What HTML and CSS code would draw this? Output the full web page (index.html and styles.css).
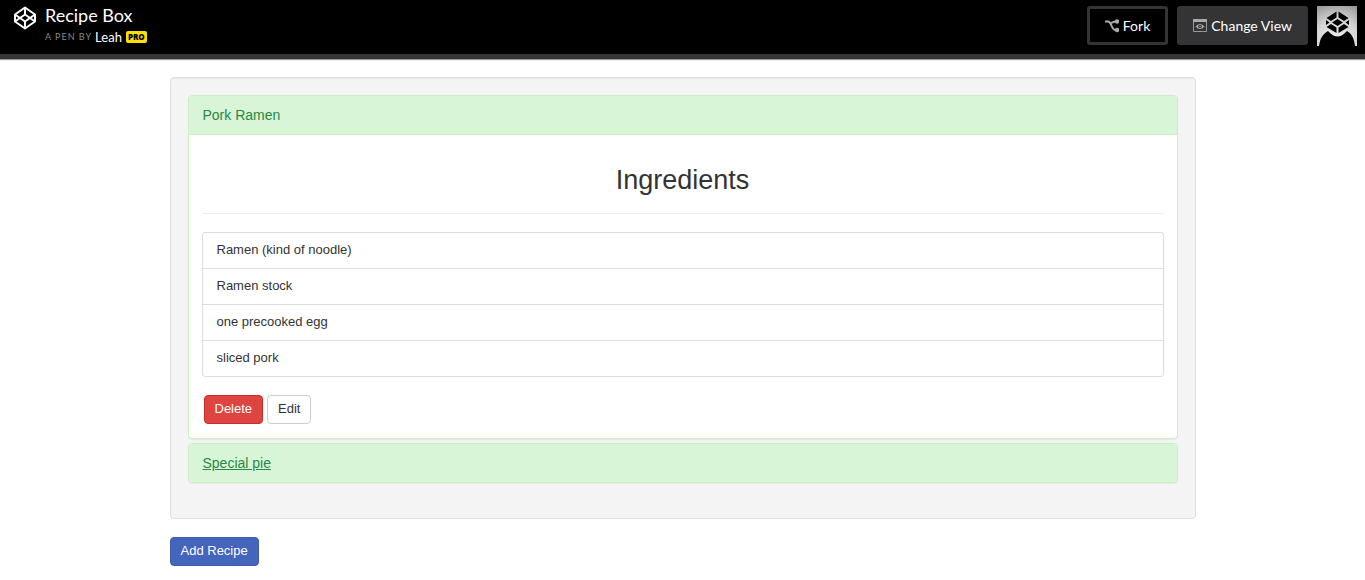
FILE: index.html
```html
<!DOCTYPE html>
<html lang="en">
<head>
  <meta charset="utf-8">
  <meta name="viewport" content="width=device-width, initial-scale=1">
  <title>Recipe Box</title>
  <link rel="stylesheet" href="styles.css">
</head>
<body>
  <header class="topbar">
    <a class="logo" href="#" aria-label="CodePen">
      <svg viewBox="0 0 24 24" width="24" height="24" fill="none" stroke="#fff" stroke-width="2" stroke-linejoin="round">
        <path d="M12 1.500 22 8.500V15.500L12 22.500 2 15.500V8.500Z"/>
        <path d="M12 1.500V8.500M12 15.500V22.500M2 8.500 12 15.500 22 8.500M2 15.500 12 8.500 22 15.500"/>
      </svg>
    </a>
    <div class="pen-title">
      <h1 class="pen-name">Recipe Box</h1>
      <div class="byline"><span class="by">A PEN BY</span><a class="author" href="#">Leah</a><span class="pro">PRO</span></div>
    </div>
    <nav class="actions">
      <button class="action fork" type="button">
        <svg class="icon" viewBox="0 0 14 14" width="14" height="14" fill="none" stroke="#aaa" stroke-width="2">
          <path d="M0 2.500H3C6.500 2.500 6.500 11 10.500 11H12M5 4C6.500 4.500 7.500 2.500 11 2.500"/>
          <circle cx="12" cy="2.500" r="1.200" fill="#aaa"/><circle cx="12" cy="11" r="1.200" fill="#aaa"/>
        </svg>
        Fork
      </button>
      <button class="action view" type="button">
        <svg class="icon" viewBox="0 0 14 13" width="14" height="13">
          <path d="M.5 .5H13.500V12.500H.5Z" fill="none" stroke="#999"/>
          <path d="M0 0H14V3H0Z" fill="#aaa"/>
          <path d="M2.500 7.500Q7 2.500 11.500 7.500Q7 12.500 2.500 7.500Z" fill="#aaa"/>
          <circle cx="7" cy="7.500" r="1.800" fill="#373739"/><circle cx="7" cy="7.500" r=".7" fill="#aaa"/>
        </svg>
        Change View
      </button>
      <a class="avatar" href="#" aria-label="Profile">
        <svg viewBox="0 0 40 40" width="40" height="40">
          <defs>
            <radialGradient id="glow" cx=".5" cy=".85" r=".95">
              <stop offset="0" stop-color="#eee"/><stop offset=".55" stop-color="#d6d6d6"/><stop offset="1" stop-color="#999"/>
            </radialGradient>
          </defs>
          <path d="M0 0H40V40H0Z" fill="url(#glow)"/>
          <path d="M2 40C3 32 6 28 11 25Q16 30.500 20.500 30.500T30 25C35 28 37 32 38 40Z" fill="#000"/>
          <path d="M19.500 5.500V11.500L14 15 9.500 12ZM21.500 5.500V11.500L27 15 31.500 12ZM9 14 12.500 16.500 9 19ZM32 14 28.500 16.500 32 19ZM20.500 13 26 16.500 20.500 20 15 16.500ZM9.500 21 14 18 19.500 21.500V27ZM31.500 21 27 18 21.500 21.500V27Z" fill="#000"/>
        </svg>
      </a>
    </nav>
  </header>

  <main class="container">
    <section class="well">
      <article class="panel">
        <h2 class="panel-heading"><a class="panel-link" href="#ramen">Pork Ramen</a></h2>
        <div class="panel-body" id="ramen">
          <h3 class="ingredients-title">Ingredients</h3>
          <ul class="list">
            <li class="list-item">Ramen (kind of noodle)</li>
            <li class="list-item">Ramen stock</li>
            <li class="list-item">one precooked egg</li>
            <li class="list-item">sliced pork</li>
          </ul>
          <div class="buttons">
            <button class="btn btn-danger" type="button">Delete</button>
            <button class="btn btn-default" type="button">Edit</button>
          </div>
        </div>
      </article>
      <article class="panel">
        <h2 class="panel-heading"><a class="panel-link underlined" href="#pie">Special pie</a></h2>
      </article>
    </section>
    <button class="btn btn-primary" type="button">Add Recipe</button>
  </main>
</body>
</html>
```
FILE: styles.css
```css
* {
  box-sizing: border-box;
}

body {
  margin: 0;
  background: #fff;
  color: #333;
  font: 13px/18px "Liberation Sans", Arial, sans-serif;
}

a {
  color: inherit;
  text-decoration: none;
}

.topbar {
  display: flex;
  align-items: flex-start;
  padding: 6px 8px 8px 13px;
  background: #000;
  border-bottom: 5px solid #343436;
  box-shadow: 0 1px 1px rgba(0, 0, 0, 0.4);
  color: #fff;
  font-family: Lato, sans-serif;
}

.logo {
  height: 24px;
}

.pen-title {
  margin-left: 8px;
}

.pen-name {
  margin: 0;
  font-size: 18px;
  font-weight: 400;
  line-height: 18px;
}

.byline {
  display: flex;
  align-items: center;
  margin-top: 4px;
}

.by {
  margin-right: 3px;
  color: #888;
  font-size: 9px;
  letter-spacing: 1px;
}

.author {
  font-size: 13px;
}

.pro {
  margin-left: 4px;
  padding: 0 2px;
  border-radius: 2px;
  background: #fce000;
  color: #000;
  font: 900 8px/12px "Open Sans", Lato, sans-serif;
}

.actions {
  display: flex;
  gap: 9px;
  margin-left: auto;
}

.action {
  display: flex;
  align-items: center;
  gap: 4px;
  height: 39px;
  border: 3px solid #343436;
  border-radius: 3px;
  color: #fff;
  font: 14px/20px Lato, sans-serif;
}

.fork {
  padding: 0 15px;
  background: #000;
}

.view {
  padding: 0 13px;
  background: #343436;
}

.avatar,
.avatar svg,
.logo svg {
  display: block;
}

.container {
  max-width: 1056px;
  margin: 0 auto;
  padding: 18px 15px 14px;
}

.well {
  display: flex;
  flex-direction: column;
  gap: 4px;
  margin-bottom: 18px;
  padding: 17px 17px 35px;
  border: 1px solid #dfdfdf;
  border-radius: 4px;
  background: #f4f4f4;
  box-shadow: inset 0 1px 1px rgba(0, 0, 0, 0.05);
}

.panel {
  border: 1px solid #caf0c2;
  border-radius: 4px;
  background: #fff;
  box-shadow: 0 1px 1px rgba(0, 0, 0, 0.05);
}

.panel-heading {
  margin: 0;
  padding: 10px 14px;
  border-radius: 3px;
  background: #d8f5d7;
  color: #2a8745;
  font-size: 14px;
  font-weight: 400;
  line-height: 18px;
}

.panel-heading:not(:last-child) {
  border-bottom: 1px solid #caf0c2;
  border-radius: 3px 3px 0 0;
}

.underlined {
  text-decoration: underline;
}

.panel-body {
  padding: 30px 13px 14px;
}

.ingredients-title {
  margin: 0 0 18px;
  padding-bottom: 18px;
  border-bottom: 1px solid #eee;
  font-size: 27px;
  font-weight: 400;
  line-height: 30px;
  text-align: center;
}

.list {
  margin: 0 0 18px;
  padding: 0;
  border: 1px solid #ddd;
  border-radius: 3px;
  list-style: none;
}

.list-item {
  padding: 8px 14px 9px;
}

.list-item + .list-item {
  border-top: 1px solid #ddd;
}

.buttons {
  display: flex;
  gap: 4px;
  margin-left: 2px;
}

.btn {
  padding: 4px 10px 5px;
  border: 1px solid;
  border-radius: 4px;
  font: 13px/18px "Liberation Sans", Arial, sans-serif;
}

.btn-danger {
  border-color: #ce2b27;
  background: #de4540;
  color: #fff;
}

.btn-default {
  border-color: #ccc;
  background: #fff;
  color: #333;
}

.btn-primary {
  border-color: #3f5bae;
  background: #4564bb;
  color: #fff;
}
```
